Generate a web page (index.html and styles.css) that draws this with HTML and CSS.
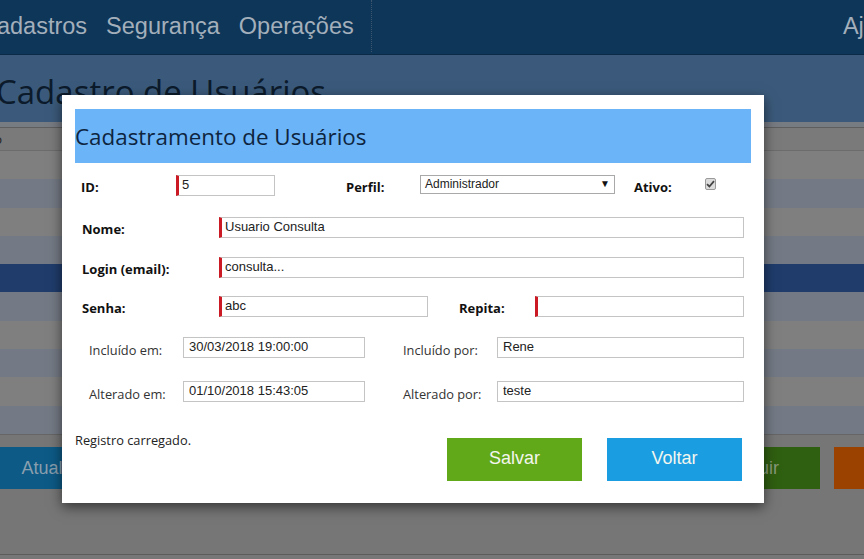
FILE: index.html
```html
<!DOCTYPE html>
<html lang="pt-BR">
<head>
<meta charset="utf-8">
<title>Cadastro de Usuários</title>
<link rel="stylesheet" href="styles.css">
</head>
<body>
<div class="page">
  <nav class="topnav">
    <div class="menu">
      <span class="menu-item">Cadastros</span>
      <span class="menu-item">Segurança</span>
      <span class="menu-item">Operações</span>
    </div>
    <div class="menu-sep"></div>
    <div class="menu-right"><span class="menu-item">Ajuda</span></div>
  </nav>
  <header class="band">
    <h1 class="page-title">Cadastro de Usuários</h1>
  </header>
  <div class="strip"></div>
  <div class="table">
    <div class="thead">Código</div>
    <div class="row gray"></div>
    <div class="row blue"></div>
    <div class="row gray"></div>
    <div class="row blue"></div>
    <div class="row sel"></div>
    <div class="row blue"></div>
    <div class="row gray"></div>
    <div class="row blue"></div>
    <div class="row gray"></div>
    <div class="row blue"></div>
  </div>
  <div class="toolbar">
    <span class="tb-btn tb-blue">Atualizar</span>
    <span class="tb-spacer"></span>
    <span class="tb-btn tb-green">Excluir</span>
    <span class="tb-btn tb-orange">Sair</span>
  </div>
  <div class="foot"></div>
</div>

<div class="modal">
  <h2 class="modal-title">Cadastramento de Usuários</h2>

  <div class="frow r1">
    <label class="lbl w-id">ID:</label>
    <input class="inp req w-idinp" value="5">
    <label class="lbl w-perfil">Perfil:</label>
    <div class="select"><span>Administrador</span><span class="arrow">▼</span></div>
    <label class="lbl w-ativo">Ativo:</label>
    <span class="check"><svg width="9" height="8" viewBox="0 0 9 8"><path d="M1 4.2 L3.4 6.5 L8 1.2" fill="none" stroke="#444" stroke-width="1.8"/></svg></span>
  </div>

  <div class="frow r2">
    <label class="lbl w-long">Nome:</label>
    <input class="inp req w-full" value="Usuario Consulta">
  </div>

  <div class="frow r3">
    <label class="lbl w-long">Login (email):</label>
    <input class="inp req w-full" value="consulta...">
  </div>

  <div class="frow r4">
    <label class="lbl w-long">Senha:</label>
    <input class="inp req w-half" value="abc">
    <label class="lbl w-repita">Repita:</label>
    <input class="inp req w-half" value="">
  </div>

  <div class="frow r5">
    <label class="lbl2 w-dt">Incluído em:</label>
    <input class="inp w-date" value="30/03/2018 19:00:00">
    <label class="lbl2 w-por">Incluído por:</label>
    <input class="inp w-user" value="Rene">
  </div>

  <div class="frow r6">
    <label class="lbl2 w-dt">Alterado em:</label>
    <input class="inp w-date" value="01/10/2018 15:43:05">
    <label class="lbl2 w-por">Alterado por:</label>
    <input class="inp w-user" value="teste">
  </div>

  <div class="mfoot">
    <span class="status">Registro carregado.</span>
    <button class="btn btn-green">Salvar</button>
    <button class="btn btn-blue">Voltar</button>
  </div>
</div>
</body>
</html>
```
FILE: styles.css
```css
* { box-sizing: border-box; }
html, body { margin: 0; padding: 0; }
body {
  width: 864px;
  height: 559px;
  overflow: hidden;
  background: #767676;
  font-family: "Open Sans", "Noto Sans", sans-serif;
  position: relative;
}
.page {
  display: flex;
  flex-direction: column;
  height: 559px;
}
.topnav {
  height: 55px;
  background: #0e3658;
  border-bottom: 1px solid #0a2a45;
  display: flex;
  align-items: stretch;
}
.menu {
  display: flex;
  align-items: center;
  margin-left: -20px;
  gap: 19px;
  width: 391px;
  padding-bottom: 2px;
}
.menu-item {
  font-family: "Liberation Sans", Arial, sans-serif;
  font-size: 23.5px;
  color: #a3afbb;
  white-space: nowrap;
}
.menu-sep {
  width: 0;
  border-left: 1px dotted #3d5670;
  margin: 0 0 2px 0;
}
.menu-right {
  flex: 1;
  display: flex;
  align-items: center;
  justify-content: flex-end;
  margin-right: -39px;
  padding-bottom: 2px;
}
.band {
  height: 67px;
  background: #3b5a7b;
  overflow: hidden;
}
.page-title {
  margin: 15px 0 0 -4px;
  font-weight: 400;
  font-size: 33px;
  line-height: 44px;
  color: #0c1b2b;
  white-space: nowrap;
}
.strip {
  height: 6px;
  background: #777b82;
  border-bottom: 1px solid #5e5e5e;
}
.table { display: flex; flex-direction: column; }
.thead {
  height: 23px;
  background: #7a7a7a;
  font-size: 13px;
  color: #222;
  line-height: 23px;
  margin-left: -40px;
  border-bottom: 1px solid #6c6c6c;
}
.row { height: 28.3px; }
.row.gray { background: #7f7f7f; }
.row.blue { background: #747a85; }
.row.sel { background: #1f3c6b; }
.toolbar {
  height: 120px;
  border-top: 1px solid #666;
  display: flex;
  align-items: flex-start;
  padding-top: 12px;
}
.tb-btn {
  height: 42px;
  line-height: 42px;
  font-family: "Liberation Sans", Arial, sans-serif;
  font-size: 18px;
  text-align: center;
  white-space: nowrap;
}
.tb-blue { background: #0d5a86; width: 135px; margin-left: -11px; color: #8a9fae; }
.tb-spacer { flex: 1; }
.tb-green { background: #2f5f10; width: 136px; color: #87997a; margin-right: 14px; }
.tb-orange { background: #9c4200; width: 30px; color: transparent; overflow: hidden; }
.foot {
  flex: 1;
  border-top: 1px solid #5c5c5c;
  background: #777;
}

/* modal */
.modal {
  position: absolute;
  left: 62px;
  top: 95px;
  width: 702px;
  height: 408px;
  background: #fff;
  padding: 14px 13px 0 13px;
  box-shadow: 0 4px 12px rgba(0,0,0,0.55);
}
.modal-title {
  margin: 0;
  height: 54px;
  background: #6cb4f8;
  font-weight: 400;
  font-size: 22.4px;
  line-height: 56px;
  color: #0e2540;
  padding-left: 0;
}
.frow {
  display: flex;
  align-items: center;
  height: 21px;
}
.r1 { margin-top: 12px; padding-left: 6px; }
.r2 { margin-top: 21px; padding-left: 7px; }
.r3 { margin-top: 19px; padding-left: 7px; }
.r4 { margin-top: 18px; padding-left: 7px; }
.r5 { margin-top: 20px; padding-left: 14px; }
.r6 { margin-top: 23px; padding-left: 14px; }

.lbl {
  font-family: "Open Sans", sans-serif;
  font-weight: 700;
  font-size: 13px;
  color: #111;
  padding-top: 2px;
  white-space: nowrap;
}
.lbl2 {
  font-family: "Open Sans", sans-serif;
  font-size: 12.8px;
  color: #333;
  padding-top: 5px;
  white-space: nowrap;
}
.w-id { width: 95px; }
.w-perfil { width: 74px; margin-left: 71px; }
.w-ativo { width: 71px; margin-left: 19px; }
.w-long { width: 137px; }
.w-repita { width: 76px; margin-left: 31px; }
.w-dt { width: 94px; }
.w-por { width: 94px; margin-left: 38px; }

.inp {
  height: 21px;
  border: 1px solid #c4c4c4;
  padding: 0 0 3px 5px;
  font-family: "Liberation Sans", Arial, sans-serif;
  font-size: 13px;
  color: #222;
  background: #fff;
  outline: none;
  line-height: 17px;
}
.inp.req { border-left: 3px solid #cc1a24; padding-left: 3px; }
.w-idinp { width: 99px; }
.w-full { width: 525px; }
.w-half { width: 209px; }
.w-date { width: 182px; }
.w-user { width: 247px; }

.select {
  width: 195px;
  height: 19px;
  margin-top: -2px;
  border: 1px solid #a9a9a9;
  display: flex;
  justify-content: space-between;
  align-items: center;
  padding: 0 4px 2px 4px;
  font-family: "Liberation Sans", Arial, sans-serif;
  font-size: 12px;
  color: #222;
}
.arrow { font-size: 10px; color: #111; }
.check {
  width: 11px;
  height: 12px;
  margin-top: -4px;
  border: 1px solid #9a9a9a;
  border-radius: 2px;
  background: #dcdcdc;
  display: flex;
  align-items: center;
  justify-content: center;
}

.mfoot {
  display: flex;
  align-items: flex-start;
  margin-top: 29px;
}
.status {
  font-size: 12.8px;
  color: #222;
  width: 372px;
}
.btn {
  margin-top: 7px;
  width: 135px;
  height: 43px;
  border: 0;
  color: #f2f6ee;
  font-family: "Liberation Sans", Arial, sans-serif;
  font-size: 18px;
  padding: 0 0 2px 0;
}
.btn-green { background: #62a91a; }
.btn-blue { background: #1b9de2; margin-left: 25px; }
```
